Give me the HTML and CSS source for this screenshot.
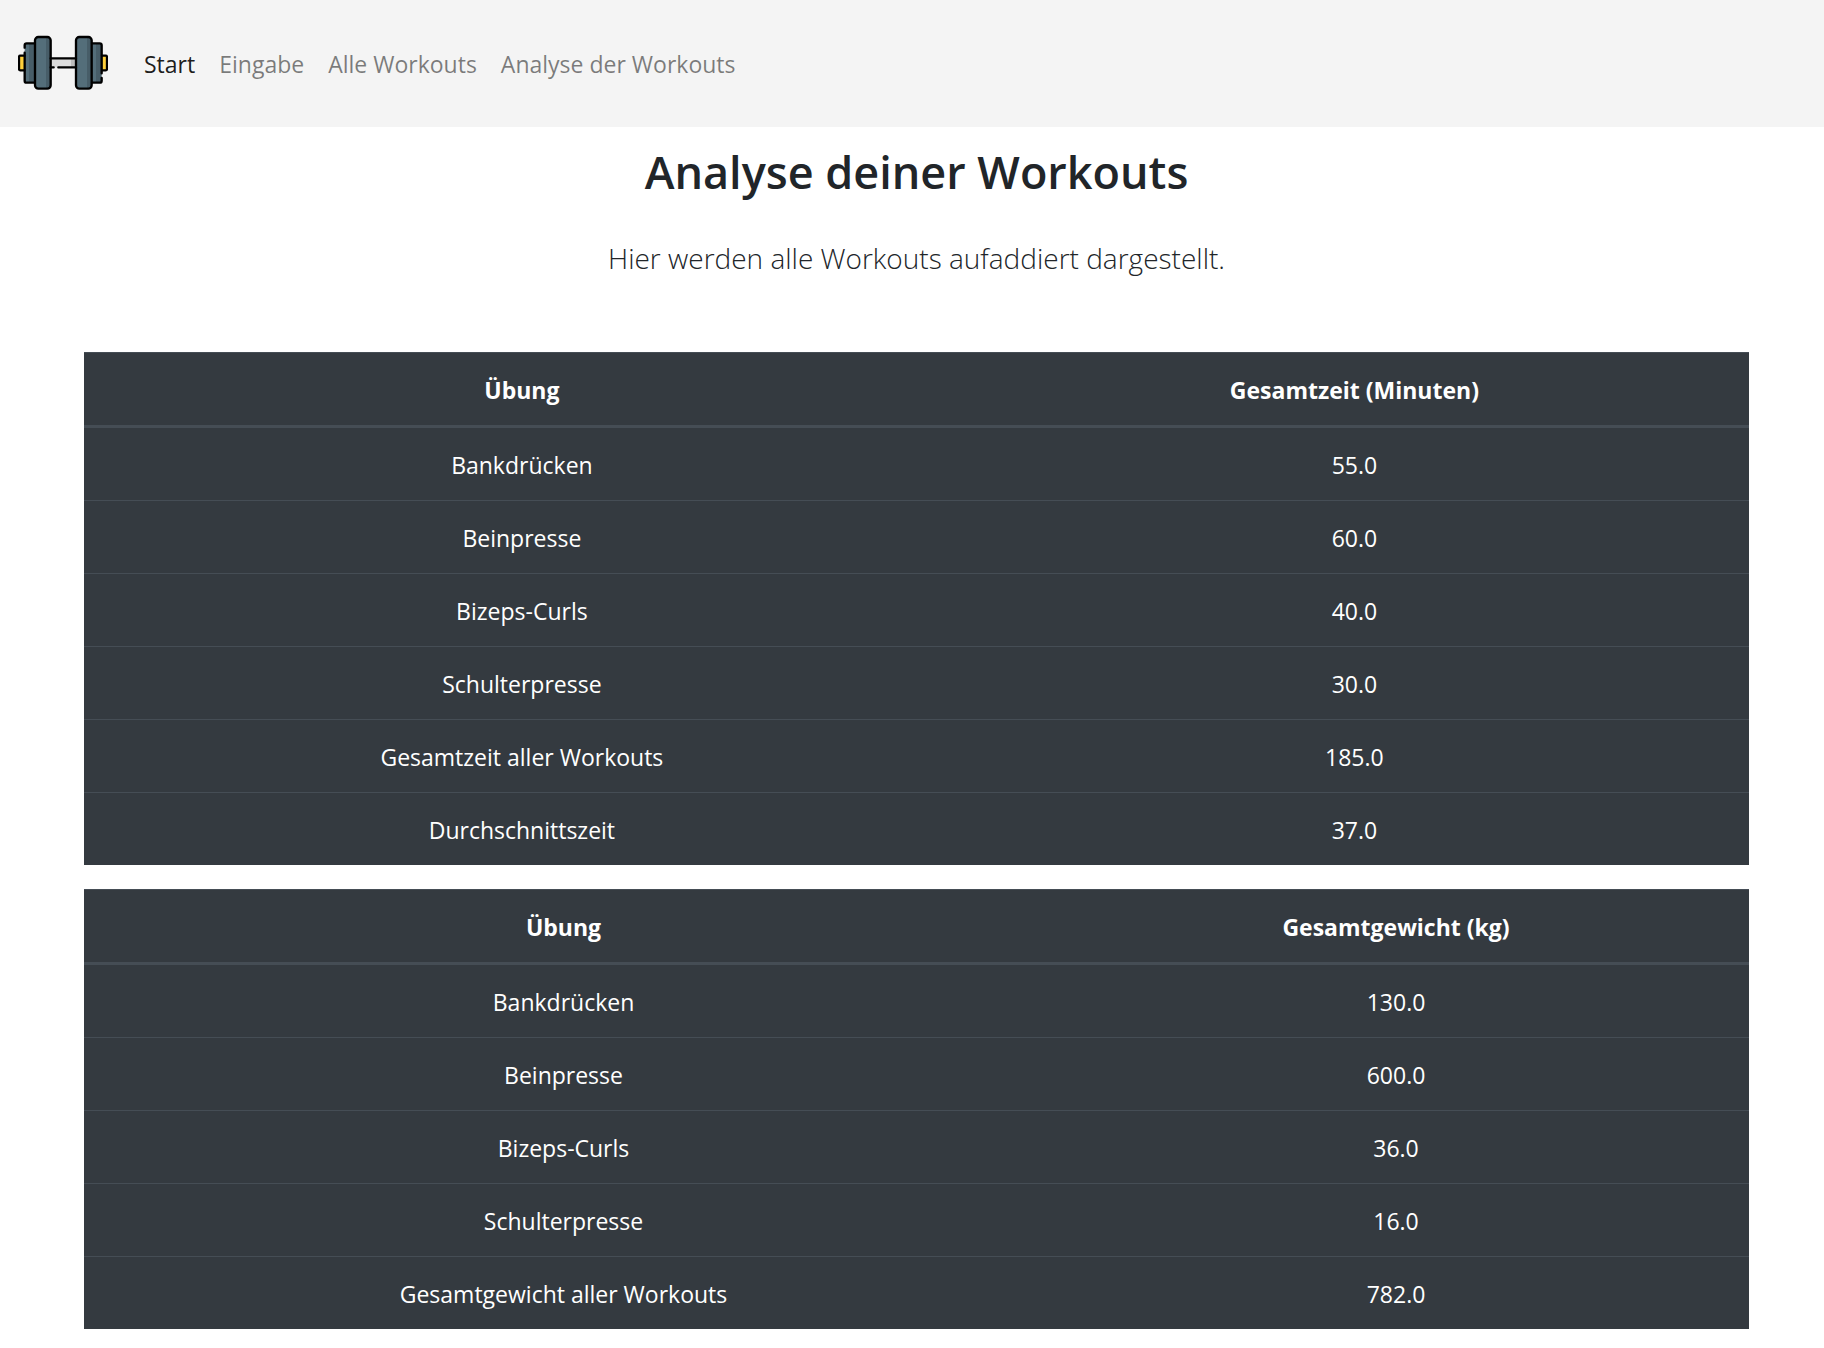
FILE: index.html
```html
<!DOCTYPE html>
<html lang="de">
<head>
<meta charset="utf-8">
<meta name="viewport" content="width=device-width, initial-scale=1">
<title>Analyse deiner Workouts</title>
<link rel="stylesheet" href="styles.css">
</head>
<body>
<nav class="navbar">
  <a class="brand" href="#" aria-label="Startseite">
    <svg class="logo" viewBox="54 -6 270 270" aria-hidden="true">
      <path fill="#dcdcdc" d="M152 116h76v26h-76z"/>
      <path fill="#bdbdbd" d="M213 116h15v26h-15z"/>
      <g fill="#ffd03b">
        <rect x="57" y="108" width="18" height="42" rx="3"/>
        <rect x="303" y="108" width="18" height="42" rx="3"/>
      </g>
      <g fill="#546e7a">
        <rect x="74" y="70" width="32" height="118" rx="6"/>
        <rect x="273" y="70" width="32" height="118" rx="6"/>
        <rect x="105" y="52" width="47" height="153" rx="9"/>
        <rect x="228" y="52" width="47" height="153" rx="9"/>
      </g>
      <g fill="#475d68">
        <path d="M87 72h16v114H87zM288 72h15v114h-15zM138 54h7q6 0 6 8v134q0 8-6 8h-7zM261 54h7q6 0 6 8v134q0 8-6 8h-7z"/>
      </g>
      <g fill="none" stroke="#000" stroke-width="7" stroke-linecap="round" stroke-linejoin="round">
        <rect x="105" y="51" width="47" height="155" rx="10"/>
        <rect x="228" y="51" width="47" height="155" rx="10"/>
        <path d="M152 115h76M152 142h9M175 142h53"/>
        <path d="M103 70H80q-6 0-6 6v7M74 98v84q0 6 6 6h23"/>
        <path d="M276 70h23q6 0 6 6v84M305 174v8q0 6-6 6h-23"/>
        <path d="M73 107H61q-4 0-4 4v36q0 4 4 4h12M306 107h11q4 0 4 4v36q0 4-4 4h-11"/>
      </g>
    </svg>
  </a>
  <ul class="nav-list">
    <li><a class="nav-link active" href="#" aria-current="page">Start</a></li>
    <li><a class="nav-link" href="#">Eingabe</a></li>
    <li><a class="nav-link" href="#">Alle Workouts</a></li>
    <li><a class="nav-link" href="#">Analyse der Workouts</a></li>
  </ul>
</nav>
<main class="content">
  <h1 class="title">Analyse deiner Workouts</h1>
  <p class="lead">Hier werden alle Workouts aufaddiert dargestellt.</p>
  <table class="table time">
    <thead><tr><th scope="col">Übung</th><th scope="col">Gesamtzeit (Minuten)</th></tr></thead>
    <tbody>
      <tr><td>Bankdrücken</td><td>55.0</td></tr>
      <tr><td>Beinpresse</td><td>60.0</td></tr>
      <tr><td>Bizeps-Curls</td><td>40.0</td></tr>
      <tr><td>Schulterpresse</td><td>30.0</td></tr>
      <tr><td>Gesamtzeit aller Workouts</td><td>185.0</td></tr>
      <tr><td>Durchschnittszeit</td><td>37.0</td></tr>
    </tbody>
  </table>
  <table class="table weight">
    <thead><tr><th scope="col">Übung</th><th scope="col">Gesamtgewicht (kg)</th></tr></thead>
    <tbody>
      <tr><td>Bankdrücken</td><td>130.0</td></tr>
      <tr><td>Beinpresse</td><td>600.0</td></tr>
      <tr><td>Bizeps-Curls</td><td>36.0</td></tr>
      <tr><td>Schulterpresse</td><td>16.0</td></tr>
      <tr><td>Gesamtgewicht aller Workouts</td><td>782.0</td></tr>
    </tbody>
  </table>
</main>
</body>
</html>
```
FILE: styles.css
```css
* {
  box-sizing: border-box;
}

body {
  margin: 0;
  background: #fff;
  color: #212529;
  font-family: "Segoe UI", "Open Sans", "Noto Sans", sans-serif;
  font-size: 23px;
  line-height: 36px;
}

.navbar {
  display: flex;
  align-items: center;
  gap: 24px;
  padding: 18px 18px 19px;
  background: #f4f4f4;
}

.brand,
.logo {
  display: block;
}

.logo {
  width: 90px;
  height: 90px;
}

.nav-list {
  display: flex;
  flex-wrap: wrap;
  margin: 0;
  padding: 0;
  list-style: none;
}

.nav-link {
  display: block;
  padding: 13px 12px 11px;
  color: rgba(0, 0, 0, 0.5);
  text-decoration: none;
}

.nav-link.active {
  color: rgba(0, 0, 0, 0.9);
}

.content {
  padding: 16px 75px 19px 84px;
}

.title {
  margin: 0 0 35px;
  font-size: 45px;
  font-weight: 600;
  line-height: 58px;
  text-align: center;
}

.lead {
  margin: 0 0 71px;
  font-size: 28px;
  font-weight: 300;
  line-height: 45px;
  text-align: center;
}

.table {
  width: 100%;
  margin: 0 0 24px;
  table-layout: fixed;
  border-spacing: 0;
  background: #343a40;
  color: #fff;
  text-align: center;
}

.table:last-child {
  margin-bottom: 0;
}

.table th,
.table td {
  padding: 19px 18px 17px;
  border-top: 1px solid #454d55;
}

.table th {
  border-bottom: 3px solid #454d55;
  font-weight: 700;
}

.table tbody tr:first-child td {
  border-top: 0;
}

.time th:first-child {
  width: 52.6%;
}

.weight th:first-child {
  width: 57.6%;
}
```
